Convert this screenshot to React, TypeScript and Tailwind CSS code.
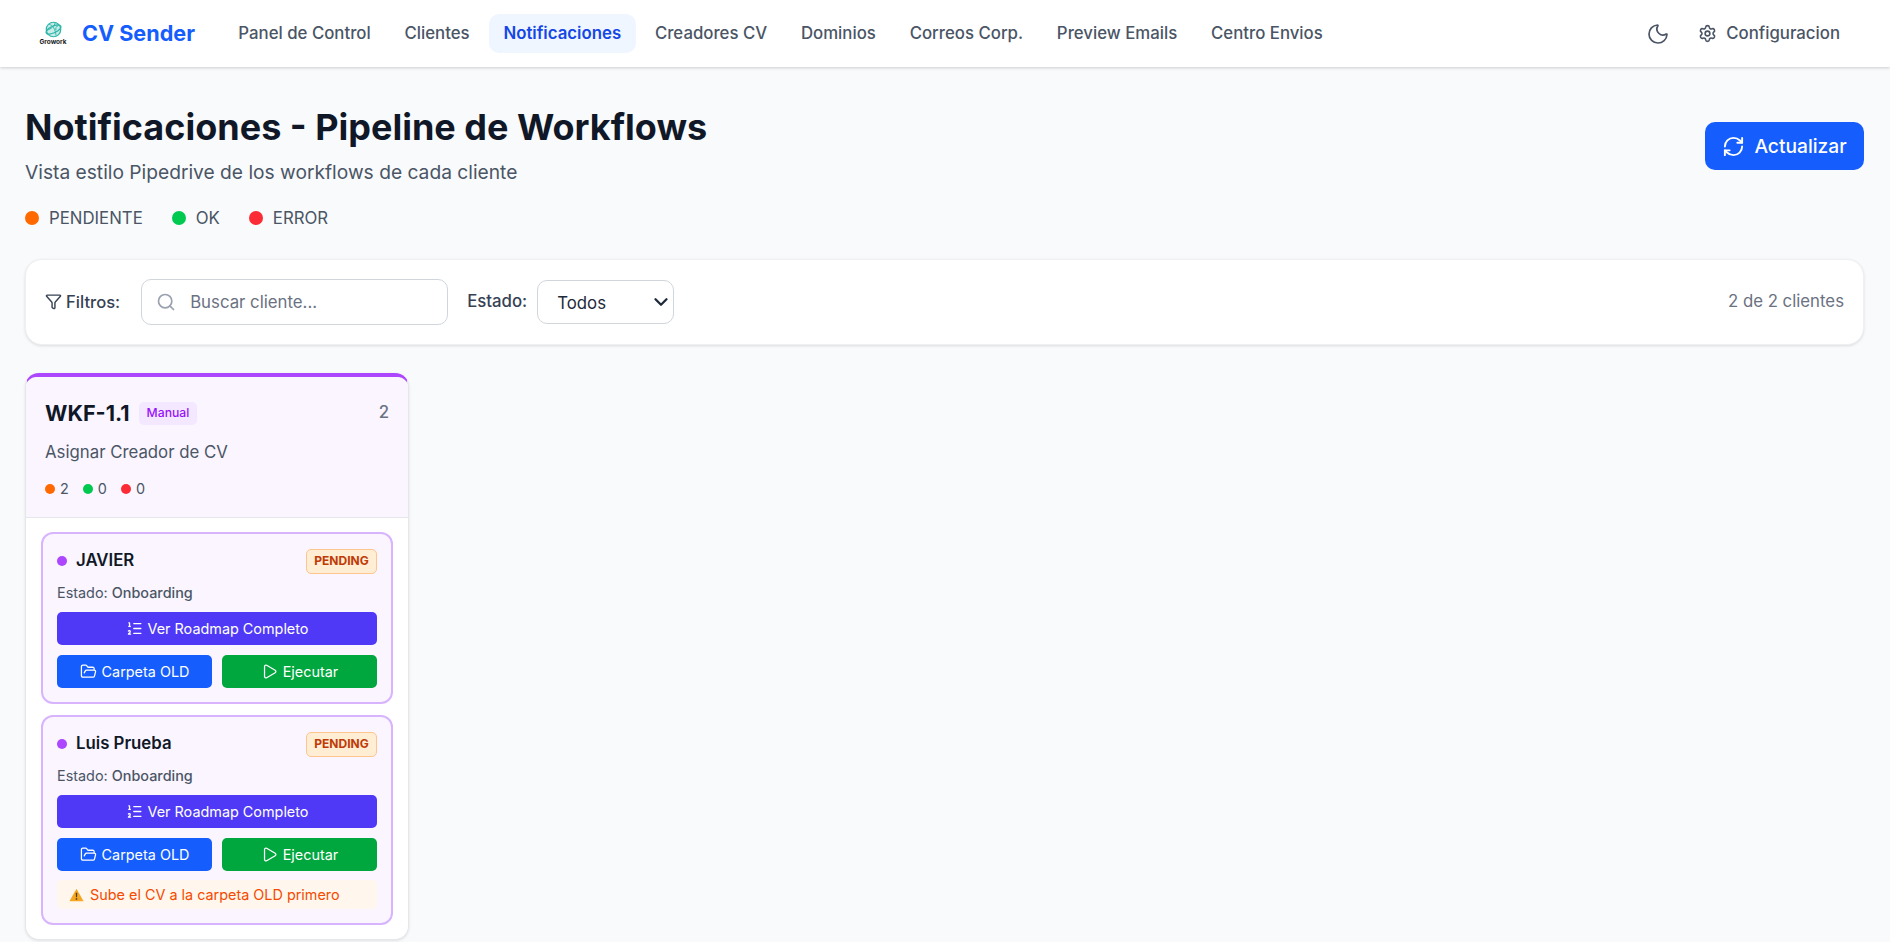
import { Moon, Settings, RefreshCw, Funnel, Search, ListOrdered, FolderOpen, Play, ChevronDown } from "lucide-react";

const navItems = ["Panel de Control", "Clientes", "Notificaciones", "Creadores CV", "Dominios", "Correos Corp.", "Preview Emails", "Centro Envios"];

function GroworkLogo() {
  return (
    <div className="flex w-[26px] flex-col items-center">
      <svg viewBox="0 0 20 20" className="h-[17px] w-[17px]" fill="none" stroke="#2fb5a8" strokeWidth="1.4">
        <circle cx="10" cy="10" r="8.5" fill="#c8ece7" />
        <ellipse cx="10" cy="10" rx="9.5" ry="4" transform="rotate(-25 10 10)" />
        <path d="M5 4c4 1 7 5 8 13M12 2c-1 4-4 7-10 9M16 5c-3 1-4 4-3 6" strokeWidth="1.1" />
      </svg>
      <span className="mt-[1px] text-[6.5px] font-bold leading-[7px] text-[#1a1a1a]">Growork</span>
    </div>
  );
}

function ClientCard({ name, warning }: { name: string; warning?: boolean }) {
  return (
    <div className="rounded-[12px] border-2 border-[#d8b4fe] bg-[#faf5ff] px-[14px] pb-[14px] pt-[14px]">
      <div className="flex h-[26px] items-center justify-between">
        <div className="flex items-center gap-[9px]">
          <span className="h-[10px] w-[10px] rounded-full bg-[#ad46ff]" />
          <span className="text-[16.8px] font-semibold text-[#101828]">{name}</span>
        </div>
        <span className="flex h-[25px] w-[71px] items-center justify-center rounded-[5px] border border-[#ffc58f] bg-[#ffedd4] text-[12px] font-bold text-[#c03a06]">PENDING</span>
      </div>
      <div className="mt-[9px] h-[20px] text-[14.4px] leading-[20px] text-[#4a5565]">
        Estado: <span className="font-medium">Onboarding</span>
      </div>
      <button className="mt-[9px] flex h-[33px] w-full items-center justify-center gap-[5px] rounded-[5px] bg-[#4f39f6] text-[14.4px] text-white">
        <ListOrdered className="h-[17px] w-[17px]" strokeWidth={1.8} />
        Ver Roadmap Completo
      </button>
      <div className="mt-[10px] grid grid-cols-2 gap-[10px]">
        <button className="flex h-[33px] items-center justify-center gap-[5px] rounded-[5px] bg-[#155dfc] text-[14.4px] text-white">
          <FolderOpen className="h-[17px] w-[17px]" strokeWidth={1.8} />
          Carpeta OLD
        </button>
        <button className="flex h-[33px] items-center justify-center gap-[5px] rounded-[5px] bg-[#00a63e] text-[14.4px] text-white">
          <Play className="h-[17px] w-[17px]" strokeWidth={1.8} />
          Ejecutar
        </button>
      </div>
      {warning && (
        <div className="mt-[9px] flex h-[29px] items-center gap-[6px] rounded-[5px] bg-[#fff7ed] px-[12px] text-[14.4px] text-[#f54a00]">
          <svg viewBox="0 0 16 15" className="h-[14px] w-[15px]">
            <path d="M8 .8 15.6 14.2H.4z" fill="#f5a623" />
            <path d="M7.2 5h1.6l-.25 5h-1.1zM7.2 11h1.6v1.6H7.2z" fill="#4a3a1a" />
          </svg>
          Sube el CV a la carpeta OLD primero
        </div>
      )}
    </div>
  );
}

export default function App() {
  return (
    <div className="h-screen overflow-hidden bg-[#f9fafc] font-['Inter',sans-serif]">
      {/* Header */}
      <header className="flex h-[67px] items-center justify-between bg-white pl-[40px] pr-[36px] shadow-[0_1px_3px_rgba(0,0,0,0.18)]">
        <div className="flex items-center">
          <GroworkLogo />
          <span className="ml-[16px] text-[21.6px] font-bold text-[#155dfc]">CV Sender</span>
          <nav className="ml-[29px] flex items-center gap-[5px]">
            {navItems.map((item) => (
              <a
                key={item}
                className={
                  item === "Notificaciones"
                    ? "flex h-[39px] items-center rounded-[10px] bg-[#eff6ff] px-[14.4px] text-[16.8px] font-semibold text-[#1447e6]"
                    : "flex h-[39px] items-center rounded-[10px] px-[14.4px] text-[16.8px] font-medium text-[#4a5565]"
                }
              >
                {item}
              </a>
            ))}
          </nav>
        </div>
        <div className="flex items-center gap-[14px] text-[#4a5565]">
          <Moon className="h-[24px] w-[24px]" strokeWidth={1.7} />
          <div className="flex items-center gap-[9px] px-[14px] text-[16.8px] font-medium">
            <Settings className="h-[19px] w-[19px]" />
            Configuracion
          </div>
        </div>
      </header>

      <main className="pl-[25px] pr-[26px] pt-[35px]">
        {/* Title */}
        <div className="flex items-start justify-between">
          <div>
            <h1 className="text-[36px] font-bold leading-[50px] text-[#101828]">Notificaciones - Pipeline de Workflows</h1>
            <p className="mt-[6px] text-[19.2px] leading-[29px] text-[#4a5565]">Vista estilo Pipedrive de los workflows de cada cliente</p>
            <div className="mt-[19px] flex items-center gap-[29px] text-[16.8px] leading-[24px] text-[#4a5565]">
              <div className="flex items-center gap-[10px]">
                <span className="h-[14px] w-[14px] rounded-full bg-[#ff6900]" />
                PENDIENTE
              </div>
              <div className="flex items-center gap-[10px]">
                <span className="h-[14px] w-[14px] rounded-full bg-[#00c950]" />
                OK
              </div>
              <div className="flex items-center gap-[10px]">
                <span className="h-[14px] w-[14px] rounded-full bg-[#fb2c36]" />
                ERROR
              </div>
            </div>
          </div>
          <button className="mt-[20px] flex h-[48px] w-[159px] items-center justify-center gap-[9px] rounded-[10px] bg-[#155dfc] text-[19.2px] font-medium text-white">
            <RefreshCw className="h-[23px] w-[23px]" />
            Actualizar
          </button>
        </div>

        {/* Filters */}
        <div className="mt-[29px] flex h-[86px] items-center justify-between rounded-[17px] border border-[#eef0f3] bg-white pl-[19px] pr-[19px] shadow-[0_1px_3px_rgba(0,0,0,0.12)]">
          <div className="flex items-center">
            <div className="flex items-center gap-[4px] text-[16.6px] font-medium text-[#364153]">
              <Funnel className="h-[17px] w-[17px]" />
              Filtros:
            </div>
            <div className="relative ml-[21px]">
              <Search className="absolute left-[15px] top-[13px] h-[20px] w-[20px] text-[#99a1af]" />
              <input
                placeholder="Buscar cliente..."
                className="h-[46px] w-[307px] rounded-[10px] border border-[#d1d5dc] pl-[48px] text-[16.8px] placeholder:text-[#6a7282]"
              />
            </div>
            <span className="ml-[19px] text-[16.8px] font-medium text-[#364153]">Estado:</span>
            <div className="relative ml-[10px]">
              <select className="block h-[44px] w-[137px] appearance-none rounded-[10px] border border-[#d1d5dc] bg-white pl-[19px] pr-[19px] pt-[3px] text-[16.8px] text-[#1e2939]">
                <option>Todos</option>
              </select>
              <ChevronDown className="absolute right-[2px] top-[11px] h-[22px] w-[22px] text-[#1e2939]" strokeWidth={2.5} />
            </div>
          </div>
          <span className="text-[16.8px] text-[#6a7282]">2 de 2 clientes</span>
        </div>

        {/* Pipeline column */}
        <div className="mt-[28px] w-[384px] rounded-[14px] border border-[#e5e7eb] border-t-[4px] border-t-[#ad46ff] bg-white shadow-[0_1px_3px_rgba(0,0,0,0.1)]">
          <div className="h-[141px] rounded-t-[10px] border-b border-[#e5e7eb] bg-[#faf5ff] px-[19px] pt-[24px]">
            <div className="flex h-[24px] items-center justify-between">
              <div className="flex items-center gap-[9px]">
                <span className="text-[21.6px] font-bold text-[#101828]">WKF-1.1</span>
                <span className="flex h-[23px] items-center rounded-[5px] bg-[#f3e8ff] px-[8px] text-[12.2px] font-medium text-[#9810fa]">Manual</span>
              </div>
              <span className="text-[16.8px] font-medium text-[#6a7282]">2</span>
            </div>
            <p className="mt-[15px] text-[16.8px] leading-[24px] text-[#4a5565]">Asignar Creador de CV</p>
            <div className="mt-[15px] flex items-center gap-[14px] text-[14.4px] leading-[20px] text-[#4a5565]">
              <span className="flex items-center gap-[5px]"><span className="h-[10px] w-[10px] rounded-full bg-[#ff6900]" />2</span>
              <span className="flex items-center gap-[5px]"><span className="h-[10px] w-[10px] rounded-full bg-[#00c950]" />0</span>
              <span className="flex items-center gap-[5px]"><span className="h-[10px] w-[10px] rounded-full bg-[#fb2c36]" />0</span>
            </div>
          </div>
          <div className="flex flex-col gap-[11px] px-[15px] pb-[14px] pt-[14px]">
            <ClientCard name="JAVIER" />
            <ClientCard name="Luis Prueba" warning />
          </div>
        </div>
      </main>
    </div>
  );
}
